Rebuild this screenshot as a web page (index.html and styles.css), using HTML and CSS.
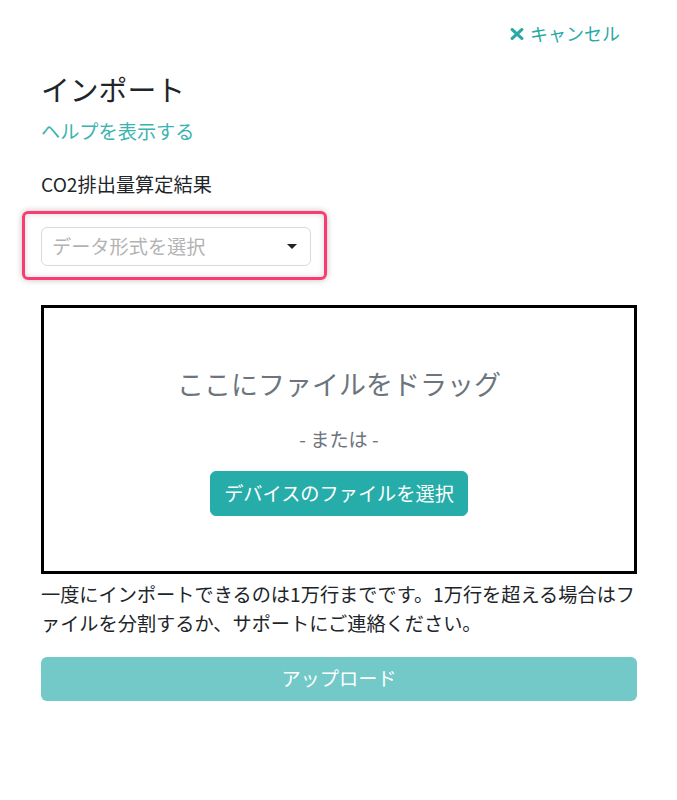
FILE: index.html
```html
<!DOCTYPE html>
<html lang="ja">
<head>
<meta charset="utf-8">
<title>インポート</title>
<link rel="stylesheet" href="styles.css">
</head>
<body>
<div class="page">
  <div class="topbar">
    <a class="cancel" href="#">
      <svg class="cancel-icon" viewBox="0 0 14 12" width="14" height="12" aria-hidden="true">
        <path d="M2.2 1.6 L11.8 10.4 M11.8 1.6 L2.2 10.4" stroke="currentColor" stroke-width="3.2" stroke-linecap="round"/>
      </svg>
      <span>キャンセル</span>
    </a>
  </div>
  <h1 class="title">インポート</h1>
  <a class="help" href="#">ヘルプを表示する</a>
  <div class="label">CO2排出量算定結果</div>
  <div class="select-wrap">
    <div class="select">
      <span class="placeholder">データ形式を選択</span>
      <span class="caret"></span>
    </div>
    <div class="highlight"></div>
  </div>
  <div class="dropzone">
    <div class="drop-title">ここにファイルをドラッグ</div>
    <div class="drop-or">- または -</div>
    <button class="btn-primary" type="button">デバイスのファイルを選択</button>
  </div>
  <p class="note">一度にインポートできるのは1万行までです。1万行を超える場合はファイルを分割するか、サポートにご連絡ください。</p>
  <button class="btn-upload" type="button">アップロード</button>
</div>
</body>
</html>
```

FILE: styles.css
```css
* { box-sizing: border-box; }

html, body {
  margin: 0;
  padding: 0;
  background: #ffffff;
}

body {
  font-family: "Noto Sans CJK JP", "Noto Sans", sans-serif;
  color: #212529;
  font-size: 19.2px;
  line-height: 1.5;
}

.page {
  padding: 20px 40px 40px 41px;
  display: flex;
  flex-direction: column;
}

.topbar {
  display: flex;
  justify-content: flex-end;
  padding-right: 17px;
}

.cancel {
  display: flex;
  align-items: center;
  gap: 6px;
  color: #2aaaa7;
  text-decoration: none;
  font-size: 18px;
  line-height: 27px;
}

.cancel-icon {
  display: block;
  margin-top: 1px;
}

.title {
  margin: 25px 0 0 0;
  font-size: 28.8px;
  font-weight: 400;
  line-height: 1.2;
  color: #212529;
}

.help {
  margin-top: 10px;
  color: #3ab4b0;
  text-decoration: none;
  line-height: 28.8px;
  align-self: flex-start;
}

.label {
  margin-top: 25px;
  line-height: 28.8px;
  color: #212529;
}

.select-wrap {
  position: relative;
  margin-top: 28px;
  width: 270px;
}

.select {
  height: 39px;
  border: 1px solid #d6d9de;
  border-radius: 6px;
  display: flex;
  align-items: center;
  justify-content: space-between;
  padding: 0 13px 0 10px;
  background: #fff;
}

.placeholder {
  color: #b3b3b3;
  line-height: 1;
}

.caret {
  width: 0;
  height: 0;
  border-left: 5px solid transparent;
  border-right: 5px solid transparent;
  border-top: 5px solid #222;
}

.highlight {
  position: absolute;
  top: -16px;
  left: -19px;
  right: -16px;
  bottom: -14px;
  border: 3px solid #fb3a72;
  border-radius: 6px;
  box-shadow: 0 0 6px rgba(0, 0, 0, 0.25), inset 0 0 6px rgba(0, 0, 0, 0.15);
  pointer-events: none;
}

.dropzone {
  margin-top: 39px;
  height: 269px;
  border: 3px solid #000;
  display: flex;
  flex-direction: column;
  align-items: center;
  padding-top: 56px;
}

.drop-title {
  font-size: 27px;
  line-height: 40.5px;
  color: #6c757d;
}

.drop-or {
  margin-top: 20px;
  line-height: 28.8px;
  color: #6c757d;
}

.btn-primary {
  margin-top: 18px;
  font-family: inherit;
  font-size: 19.2px;
  line-height: 28.8px;
  padding: 7px 13px;
  border: 1px solid #26ada9;
  border-radius: 6px;
  background: #26ada9;
  color: #ffffff;
  cursor: pointer;
}

.note {
  margin: 6px 0 0 0;
  line-height: 28.8px;
  color: #212529;
}

.btn-upload {
  margin-top: 19px;
  height: 44px;
  width: 100%;
  font-family: inherit;
  font-size: 19.2px;
  line-height: 28.8px;
  border: none;
  border-radius: 6px;
  background: #72c9c7;
  color: #ffffff;
}
```
